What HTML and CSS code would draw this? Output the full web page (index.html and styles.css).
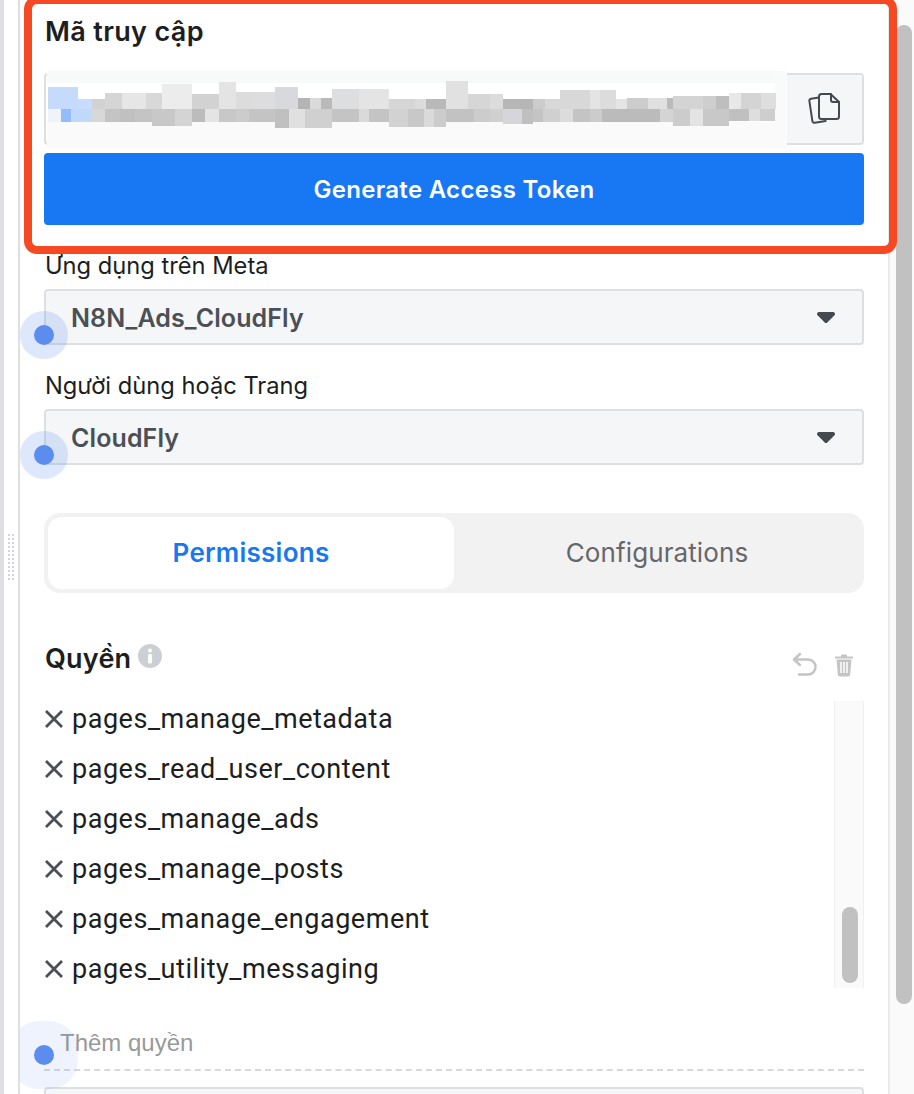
FILE: index.html
```html
<!DOCTYPE html>
<html lang="vi">
<head>
<meta charset="utf-8">
<title>Mã truy cập</title>
<link rel="stylesheet" href="styles.css">
</head>
<body>
<div class="page">
  <aside class="rail">
    <div class="grip"></div>
  </aside>
  <main class="panel">
    <h2 class="title">Mã truy cập</h2>
    <div class="token">
      <div class="token-field"></div>
      <button class="copy" aria-label="Sao chép">
        <svg width="34" height="34" viewBox="0 0 34 34" fill="none" stroke="#444950" stroke-width="2" stroke-linejoin="round" stroke-linecap="round">
          <path d="M12 5.5 4 6.8a2 2 0 0 0-1.6 2.3l3 20a2 2 0 0 0 2.300 1.700l11-1.800"/>
          <path d="M12 4.500a2.500 2.500 0 0 1 2.500-2.500h9l8.500 8v14.500a2.500 2.500 0 0 1-2.500 2.500h-15a2.500 2.500 0 0 1-2.500-2.500z" fill="#f5f6f7"/>
          <path d="M24 2v6a2 2 0 0 0 2 2h6"/>
        </svg>
      </button>
      <svg class="blur" width="740" height="77" viewBox="47 71 740 77" aria-hidden="true">
        <rect x="47" y="71" width="740" height="12" fill="#f8f9f9"/>
        <rect x="47" y="122" width="740" height="26" fill="#fafafa"/>
        <rect x="47" y="83" width="740" height="39" fill="#fff"/>
        <rect x="775" y="71" width="12" height="77" fill="#f9fafa"/>
        <rect x="48" y="87" width="30" height="22" fill="#c6dbfb"/>
        <rect x="78" y="99" width="14" height="10" fill="#c8dcfb"/>
        <rect x="92" y="99" width="13" height="10" fill="#d2d2d2"/>
        <rect x="105" y="93" width="17" height="16" fill="#d5d5d5"/>
        <rect x="122" y="93" width="24" height="16" fill="#e6e6e6"/>
        <rect x="146" y="93" width="16" height="16" fill="#d8d8d8"/>
        <rect x="162" y="84" width="30" height="25" fill="#ececec"/>
        <rect x="192" y="94" width="27" height="15" fill="#d2d2d2"/>
        <rect x="219" y="82" width="17" height="27" fill="#e4e4e4"/>
        <rect x="236" y="92" width="17" height="17" fill="#dcdcdc"/>
        <rect x="253" y="92" width="22" height="17" fill="#dddde0"/>
        <rect x="275" y="87" width="23" height="22" fill="#d8d9dc"/>
        <rect x="298" y="98" width="12" height="11" fill="#b4b4b4"/>
        <rect x="310" y="98" width="11" height="11" fill="#dadada"/>
        <rect x="321" y="98" width="11" height="11" fill="#bababa"/>
        <rect x="332" y="89" width="27" height="20" fill="#dcdee0"/>
        <rect x="359" y="89" width="30" height="20" fill="#e4e4e4"/>
        <rect x="389" y="99" width="26" height="10" fill="#d6d6d6"/>
        <rect x="415" y="99" width="11" height="10" fill="#dcdcdc"/>
        <rect x="426" y="99" width="20" height="10" fill="#b9b9b9"/>
        <rect x="446" y="81" width="22" height="28" fill="#e1e1e1"/>
        <rect x="468" y="94" width="22" height="15" fill="#d6d6d6"/>
        <rect x="490" y="94" width="13" height="15" fill="#dcdcdc"/>
        <rect x="503" y="99" width="30" height="10" fill="#b6b6b6"/>
        <rect x="533" y="99" width="12" height="10" fill="#cccccc"/>
        <rect x="545" y="99" width="15" height="10" fill="#d8d8d8"/>
        <rect x="560" y="90" width="30" height="19" fill="#d8d8d8"/>
        <rect x="590" y="90" width="10" height="19" fill="#e4e4e4"/>
        <rect x="600" y="90" width="16" height="19" fill="#dcdcdc"/>
        <rect x="616" y="99" width="11" height="10" fill="#e4e4e4"/>
        <rect x="627" y="98" width="21" height="11" fill="#cccccc"/>
        <rect x="648" y="98" width="19" height="11" fill="#e0e0e0"/>
        <rect x="667" y="98" width="10" height="11" fill="#bbbbbb"/>
        <rect x="673" y="96" width="30" height="13" fill="#d4d4d4"/>
        <rect x="703" y="96" width="13" height="13" fill="#cecece"/>
        <rect x="716" y="96" width="13" height="13" fill="#bebebe"/>
        <rect x="729" y="93" width="12" height="16" fill="#e8e8e8"/>
        <rect x="741" y="93" width="20" height="16" fill="#d4d4d4"/>
        <rect x="761" y="93" width="15" height="16" fill="#dedede"/>
        <rect x="48" y="109" width="13" height="13" fill="#eef3fe"/>
        <rect x="61" y="109" width="10" height="13" fill="#94bbfa"/>
        <rect x="71" y="109" width="21" height="13" fill="#c0d8fa"/>
        <rect x="92" y="109" width="13" height="13" fill="#d8d8d8"/>
        <rect x="105" y="109" width="15" height="13" fill="#c4c4c4"/>
        <rect x="120" y="109" width="15" height="13" fill="#c0c0c0"/>
        <rect x="135" y="109" width="17" height="13" fill="#c4c4c4"/>
        <rect x="152" y="109" width="23" height="17" fill="#c8c8c8"/>
        <rect x="175" y="109" width="17" height="17" fill="#d4d4d4"/>
        <rect x="192" y="109" width="13" height="13" fill="#bcbcbc"/>
        <rect x="205" y="109" width="14" height="13" fill="#e4e4e4"/>
        <rect x="219" y="109" width="17" height="13" fill="#c8c8c8"/>
        <rect x="236" y="109" width="13" height="13" fill="#cccccc"/>
        <rect x="249" y="109" width="26" height="13" fill="#c4c4c4"/>
        <rect x="275" y="109" width="14" height="19" fill="#c0c0c0"/>
        <rect x="289" y="109" width="16" height="19" fill="#e0e0e0"/>
        <rect x="305" y="109" width="27" height="19" fill="#d0d0d0"/>
        <rect x="332" y="109" width="27" height="13" fill="#c4c4c4"/>
        <rect x="359" y="109" width="10" height="13" fill="#dadada"/>
        <rect x="369" y="109" width="20" height="13" fill="#c4c4c4"/>
        <rect x="389" y="109" width="19" height="18" fill="#d2d2d2"/>
        <rect x="408" y="109" width="16" height="18" fill="#c8c8c8"/>
        <rect x="424" y="109" width="10" height="18" fill="#dadada"/>
        <rect x="434" y="109" width="12" height="18" fill="#cccccc"/>
        <rect x="446" y="109" width="28" height="13" fill="#c2c2c2"/>
        <rect x="474" y="109" width="16" height="13" fill="#cccccc"/>
        <rect x="490" y="109" width="13" height="13" fill="#d0d0d0"/>
        <rect x="503" y="109" width="19" height="15" fill="#d6d6da"/>
        <rect x="522" y="109" width="11" height="15" fill="#bfbfbf"/>
        <rect x="533" y="109" width="10" height="13" fill="#c4c4c4"/>
        <rect x="543" y="109" width="17" height="13" fill="#d0d0d0"/>
        <rect x="560" y="109" width="13" height="13" fill="#dcdcdc"/>
        <rect x="573" y="109" width="17" height="13" fill="#c4c4c4"/>
        <rect x="590" y="109" width="12" height="13" fill="#cccccc"/>
        <rect x="602" y="109" width="58" height="13" fill="#bbbbbb"/>
        <rect x="660" y="109" width="13" height="13" fill="#d4d4d4"/>
        <rect x="673" y="109" width="17" height="17" fill="#cccccc"/>
        <rect x="690" y="109" width="13" height="17" fill="#e4e4e4"/>
        <rect x="703" y="109" width="26" height="17" fill="#c8c8c8"/>
        <rect x="729" y="109" width="20" height="12" fill="#c0c0c0"/>
        <rect x="749" y="109" width="11" height="12" fill="#dedede"/>
        <rect x="760" y="109" width="15" height="12" fill="#cecece"/>
      </svg>
    </div>
    <button class="generate">Generate Access Token</button>

    <label class="field-label first">Ứng dụng trên Meta</label>
    <div class="select">
      <span>N8N_Ads_CloudFly</span>
      <svg class="caret" width="18" height="11" viewBox="0 0 18 11"><path d="M2 0h14a2 2 0 0 1 1.500 3.300l-7 7a2 2 0 0 1-3 0l-7-7A2 2 0 0 1 2 0z"/></svg>
      <b class="dot"></b>
    </div>
    <label class="field-label">Người dùng hoặc Trang</label>
    <div class="select">
      <span>CloudFly</span>
      <svg class="caret" width="18" height="11" viewBox="0 0 18 11"><path d="M2 0h14a2 2 0 0 1 1.500 3.300l-7 7a2 2 0 0 1-3 0l-7-7A2 2 0 0 1 2 0z"/></svg>
      <b class="dot"></b>
    </div>

    <div class="tabs">
      <div class="tab active">Permissions</div>
      <div class="tab">Configurations</div>
    </div>

    <div class="perm-head">
      <div class="perm-title">
        <h3>Quyền</h3>
        <svg class="info" width="24" height="24" viewBox="0 0 24 24"><circle cx="12" cy="12" r="12" fill="#ccd0d5"/><circle cx="12" cy="6.500" r="2" fill="#fff"/><rect x="10" y="10" width="4" height="9.500" rx="1" fill="#fff"/></svg>
      </div>
      <div class="perm-actions">
        <svg width="26" height="26" viewBox="0 0 26 26" fill="none" stroke="#c4c4c4" stroke-width="2.500" stroke-linecap="round" stroke-linejoin="round"><path d="M8 2 2 7.500l6 5.500"/><path d="M2.500 7.500H16a7.500 7.500 0 0 1 0 15H7"/></svg>
        <svg width="20" height="24" viewBox="0 0 20 24"><path d="M1 4.500h18" stroke="#c4c4c4" stroke-width="2" fill="none"/><path d="M7 4V2.500a1 1 0 0 1 1-1h4a1 1 0 0 1 1 1V4z" fill="#c4c4c4"/><path d="M2.500 6.500h15l-1.300 15a2 2 0 0 1-2 1.900H5.800a2 2 0 0 1-2-1.900z" fill="#c4c4c4"/><path d="M7 9v11M10 9v11M13 9v11" stroke="#fff" stroke-width="1.500"/></svg>
      </div>
    </div>

    <div class="perm-scroll">
      <ul class="perm-list">
        <li><svg class="x" width="20" height="20" viewBox="0 0 20 20"><path d="M2 2l16 16M18 2 2 18"/></svg>pages_manage_metadata</li>
        <li><svg class="x" width="20" height="20" viewBox="0 0 20 20"><path d="M2 2l16 16M18 2 2 18"/></svg>pages_read_user_content</li>
        <li><svg class="x" width="20" height="20" viewBox="0 0 20 20"><path d="M2 2l16 16M18 2 2 18"/></svg>pages_manage_ads</li>
        <li><svg class="x" width="20" height="20" viewBox="0 0 20 20"><path d="M2 2l16 16M18 2 2 18"/></svg>pages_manage_posts</li>
        <li><svg class="x" width="20" height="20" viewBox="0 0 20 20"><path d="M2 2l16 16M18 2 2 18"/></svg>pages_manage_engagement</li>
        <li><svg class="x" width="20" height="20" viewBox="0 0 20 20"><path d="M2 2l16 16M18 2 2 18"/></svg>pages_utility_messaging</li>
      </ul>
      <div class="mini-track"><div class="mini-thumb"></div></div>
    </div>

    <div class="add">
      <div class="add-input">Thêm quyền</div>
      <b class="dot big"></b>
    </div>
    <div class="next-box"></div>
  </main>
  <div class="scrollbar"><div class="thumb"></div></div>
  <div class="highlight"></div>
</div>
</body>
</html>
```

FILE: styles.css
```css
* { box-sizing: border-box; }
html, body { margin: 0; padding: 0; background: #fff; }
body { font-family: Inter, "Noto Sans", sans-serif; color: #1c1e21; }
.page { position: relative; display: flex; width: 914px; height: 1094px; overflow: hidden; }

.rail { position: relative; flex: 0 0 20px; border-left: 4px solid #dddfe2; border-right: 2px solid #dddfe2; }
.grip { position: absolute; left: 3px; top: 533px; width: 8px; height: 48px;
  background-image: radial-gradient(circle, #d2d4d7 1.200px, transparent 1.500px); background-size: 4px 4px; }

.panel { flex: 0 0 870px; height: 1094px; padding: 0 24px; border-right: 2px solid #eaeaea; overflow: hidden; }

.title { margin: 15px 0 0 1px; font-size: 27px; line-height: 34px; font-weight: 600; letter-spacing: .35px; }
.token { position: relative; display: flex; height: 72px; margin-top: 24px; border: 2px solid #dddfe2; border-radius: 4px; }
.token-field { flex: 1; }
.copy { flex: 0 0 76px; display: flex; align-items: center; justify-content: center; padding: 0; border: 0; background: #f5f6f7; border-radius: 0 3px 3px 0; }
.blur { position: absolute; left: 1px; top: -4px; }
.generate { display: block; width: 100%; height: 72px; margin-top: 8px; padding: 0; border: 0; border-radius: 4px; background: #1877f2; color: #fff; font: 600 24px Inter, sans-serif; letter-spacing: .3px; }

.field-label { display: block; margin: 27px 0 0 1px; font-size: 23.700px; line-height: 28px; color: #1c1e21; }
.select { position: relative; display: flex; align-items: center; justify-content: space-between; height: 56px; margin-top: 9px; padding: 1px 27px 0 25px; background: #f5f6f7; border: 2px solid #dddfe2; border-radius: 4px; font-size: 25px; font-weight: 600; letter-spacing: .1px; color: #4b4f56; }
.caret { flex: none; fill: #444950; margin-top: -1px; }
.dot { position: absolute; left: -12px; top: 34px; width: 20px; height: 20px; border-radius: 50%; background: #5b8dee; box-shadow: 0 0 0 14px rgba(91, 141, 238, .2); }
.dot.big { left: -10px; box-shadow: 0 0 0 24px rgba(91, 141, 238, .1); }

.tabs { display: flex; height: 80px; margin-top: 48px; padding: 4px; background: #f2f2f2; border-radius: 16px; }
.tab { flex: 1; display: flex; align-items: center; justify-content: center; padding-bottom: 1px; font-size: 26px; letter-spacing: .1px; color: #65676b; border-radius: 14px; }
.tab.active { background: #fff; color: #1877f2; font-weight: 600; letter-spacing: .25px; }

.perm-head { display: flex; justify-content: space-between; align-items: center; height: 46px; margin-top: 43px; }
.perm-title { display: flex; align-items: flex-start; gap: 7px; margin-left: 1px; }
.perm-title h3 { margin: 0; font-size: 27px; line-height: 48px; font-weight: 600; letter-spacing: .2px; }
.info { margin-top: 9px; }
.perm-actions { display: flex; align-items: center; gap: 16px; padding-right: 10px; padding-top: 12px; }

.perm-scroll { position: relative; display: flex; justify-content: space-between; height: 287px; margin-top: 19px; }
.perm-list { list-style: none; margin: -7px 0 0; padding: 0; font-family: Roboto, sans-serif; font-size: 27px; letter-spacing: .53px; color: #1c1e21; }
.perm-list li { display: flex; align-items: center; gap: 8px; height: 50px; }
.x { flex: none; fill: none; stroke: #4b4f56; stroke-width: 2.800; }
.mini-track { position: relative; width: 30px; background: #fafafa; border-left: 1px solid #f0f0f0; border-right: 1px solid #f0f0f0; }
.mini-thumb { position: absolute; left: 7px; top: 206px; width: 16px; height: 76px; border-radius: 8px; background: #c1c1c1; }

.add { position: relative; height: 83px; padding-top: 40px; border-bottom: 2px dashed #d8d8d8; }
.add-input { margin-left: 16px; font-family: "Liberation Sans", sans-serif; font-size: 24px; line-height: 30px; color: #999; }
.add .dot.big { top: 57px; }
.next-box { height: 40px; margin-top: 16px; background: #f5f6f7; border: 2px solid #dddfe2; border-radius: 4px; }

.scrollbar { position: relative; flex: 0 0 24px; background: #fafafa; }
.thumb { position: absolute; left: 6px; top: 25px; width: 16px; height: 979px; border-radius: 8px; background: #c1c1c1; }

.highlight { position: absolute; left: 24px; top: -4px; width: 873px; height: 258px; border: 8px solid #f64823; border-radius: 13px; pointer-events: none; }
```
